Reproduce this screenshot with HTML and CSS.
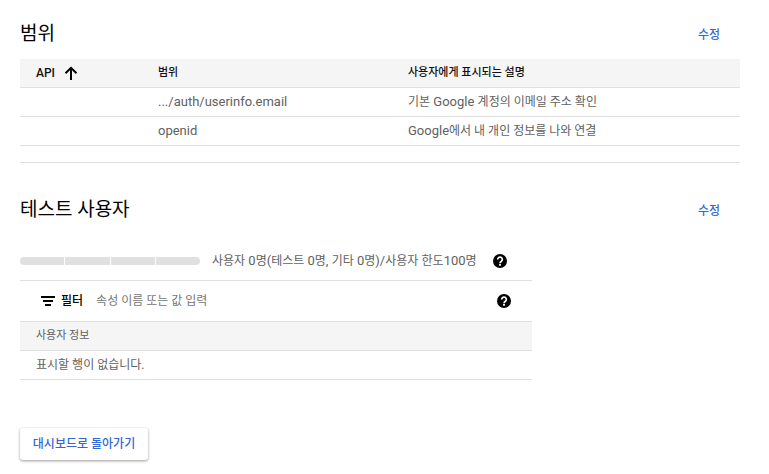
FILE: index.html
```html
<!DOCTYPE html>
<html lang="ko">
<head>
<meta charset="utf-8">
<meta name="viewport" content="width=device-width, initial-scale=1">
<title>OAuth 동의 화면</title>
<link rel="stylesheet" href="styles.css">
</head>
<body>
<main class="page">
  <section class="section scopes">
    <header class="section-header">
      <h2 class="section-title">범위</h2>
      <a class="edit-link" href="#scopes">수정</a>
    </header>
    <table class="table scope-table">
      <colgroup><col class="col-api"><col class="col-scope"><col></colgroup>
      <thead>
        <tr>
          <th scope="col"><span class="sort">API
            <svg class="sort-icon" viewBox="0 0 14 14" aria-hidden="true"><path d="M7 14V2M1.500 7.300L7 1.800l5.500 5.500" fill="none" stroke="currentColor" stroke-width="2"/></svg></span></th>
          <th scope="col">범위</th>
          <th scope="col">사용자에게 표시되는 설명</th>
        </tr>
      </thead>
      <tbody>
        <tr><td></td><td><span class="latin">.../auth/userinfo.email</span></td><td>기본<span class="latin"> Google </span>계정의 이메일 주소 확인</td></tr>
        <tr><td></td><td><span class="latin">openid</span></td><td><span class="latin">Google</span>에서 내 개인 정보를 나와 연결</td></tr>
      </tbody>
    </table>
  </section>

  <section class="section users">
    <header class="section-header">
      <h2 class="section-title">테스트 사용자</h2>
      <a class="edit-link" href="#users">수정</a>
    </header>
    <div class="users-panel">
      <div class="quota">
        <div class="meter"><span></span><span></span><span></span><span></span></div>
        <span class="quota-text">사용자<span class="latin"> 0</span>명<span class="latin">(</span>테스트<span class="latin"> 0</span>명<span class="latin">, </span>기타<span class="latin"> 0</span>명<span class="latin">)/</span>사용자<span class="latin"> </span>한도<span class="latin">100</span>명</span>
        <button class="help" type="button" aria-label="사용자 한도 도움말">
          <svg viewBox="0 0 14 14" aria-hidden="true"><circle cx="7" cy="7" r="7" fill="#000"/><path d="M4.700 5.400a2.300 2.300 0 1 1 3.800 1.700C7.500 7.800 7 8.100 7 9.200" fill="none" stroke="#fff" stroke-width="1.700"/><path d="M6.100 10.100h1.800v1.700H6.100z" fill="#fff"/></svg>
        </button>
      </div>
      <div class="filter">
        <svg class="filter-icon" viewBox="0 0 14 10" aria-hidden="true"><path d="M0 0h14v2H0zM2 4h10v2H2zM4 8h6v2H4z"/></svg>
        <label class="filter-label" for="filter">필터</label>
        <input class="filter-input" id="filter" type="text" placeholder="속성 이름 또는 값 입력">
        <button class="help" type="button" aria-label="필터 도움말">
          <svg viewBox="0 0 14 14" aria-hidden="true"><circle cx="7" cy="7" r="7" fill="#000"/><path d="M4.700 5.400a2.300 2.300 0 1 1 3.800 1.700C7.500 7.800 7 8.100 7 9.200" fill="none" stroke="#fff" stroke-width="1.700"/><path d="M6.100 10.100h1.800v1.700H6.100z" fill="#fff"/></svg>
        </button>
      </div>
      <table class="table user-table">
        <thead><tr><th scope="col">사용자 정보</th></tr></thead>
        <tbody><tr><td>표시할 행이 없습니다.</td></tr></tbody>
      </table>
    </div>
  </section>

  <button class="back" type="button">대시보드로 돌아가기</button>
</main>
</body>
</html>
```

FILE: styles.css
```css
* {
  box-sizing: border-box;
}

body {
  margin: 0;
  background: #fff;
  color: #616161;
  font-family: Roboto, "Noto Sans CJK KR", sans-serif;
  font-size: 12px;
  line-height: 20px;
}

button,
input {
  font: inherit;
}

/* Latin letters and digits are set one size up from the Hangul */
.latin {
  font-size: 13px;
}

.page {
  padding: 21px 29px 12px 20px;
}

.section-header {
  display: flex;
  align-items: flex-end;
  justify-content: space-between;
  padding-right: 20px;
}

.section-title {
  margin: 0;
  color: #000;
  font-size: 19px;
  font-weight: 400;
  line-height: 26px;
}

.edit-link {
  color: #3367d6;
  font-weight: 500;
  line-height: 24px;
  text-decoration: none;
}

.scopes {
  padding-bottom: 16px;
  border-bottom: 1px solid #e0e0e0;
}

.table {
  width: 100%;
  border-collapse: separate;
  border-spacing: 0;
  table-layout: fixed;
}

.table th,
.table td {
  height: 29px;
  padding: 0 0 0 16px;
  border-bottom: 1px solid #e0e0e0;
  text-align: left;
}

.table th {
  background: #f5f5f5;
  color: #111;
  font-size: 11px;
  font-weight: 500;
}

.scope-table {
  margin-top: 12px;
}

.col-api {
  width: 122px;
}

.col-scope {
  width: 250px;
}

.sort {
  display: flex;
  align-items: center;
  gap: 9px;
  font-size: 12px;
}

.sort-icon {
  width: 14px;
  height: 14px;
  color: #000;
}

.users {
  padding-top: 34px;
}

.users-panel {
  max-width: 512px;
}

.quota {
  display: flex;
  align-items: center;
  height: 38px;
  margin-top: 19px;
}

.meter {
  display: flex;
  gap: 1px;
  width: 180px;
  height: 8px;
  margin-right: 12px;
  border-radius: 4px;
  overflow: hidden;
}

.meter span {
  flex: 1;
  background: #e0e0e0;
}

.quota-text {
  margin-right: 16px;
}

.help {
  flex: none;
  width: 14px;
  height: 14px;
  padding: 0;
  border: 0;
  background: none;
}

.help svg {
  display: block;
}

.filter {
  display: flex;
  align-items: center;
  height: 42px;
  padding: 0 21px;
  border-top: 1px solid #e0e0e0;
  border-bottom: 1px solid #e0e0e0;
}

.filter-icon {
  width: 14px;
  height: 10px;
  margin-right: 6px;
}

.filter-label {
  margin-right: 13px;
  color: #000;
  font-weight: 500;
}

.filter-input {
  flex: 1;
  min-width: 0;
  padding: 0;
  border: 0;
  outline: 0;
  color: #212121;
}

.filter-input::placeholder {
  color: #757575;
}

.user-table th {
  color: #616161;
  font-weight: 400;
}

.back {
  min-width: 128px;
  height: 32px;
  margin-top: 48px;
  padding: 0 12px;
  border: 0;
  border-radius: 3px;
  background: #fff;
  box-shadow: 0 1px 3px rgba(0, 0, 0, 0.4);
  color: #3367d6;
  font-weight: 500;
}
```
